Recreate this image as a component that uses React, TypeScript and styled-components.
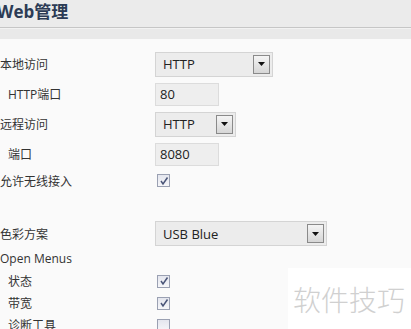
import React from "react";
import styled, { createGlobalStyle } from "styled-components";

const Global = createGlobalStyle`
  body {
    margin: 0;
    background: #fafafa;
    font-family: "Open Sans", "Noto Sans CJK SC", sans-serif;
    color: #333;
    overflow: hidden;
  }
`;

interface Field {
  label: string;
  indent?: boolean;
  kind: "select" | "input" | "check" | "blank" | "heading";
  value?: string;
  width?: number;
  checked?: boolean;
  h: number;
}

const fields: Field[] = [
  { label: "本地访问", kind: "select", value: "HTTP", width: 118, h: 30 },
  { label: "HTTP端口", indent: true, kind: "input", value: "80", width: 64, h: 30 },
  { label: "远程访问", kind: "select", value: "HTTP", width: 81, h: 30 },
  { label: "端口", indent: true, kind: "input", value: "8080", width: 64, h: 30 },
  { label: "允许无线接入", kind: "check", checked: true, h: 23 },
  { label: "", kind: "blank", h: 28 },
  { label: "色彩方案", kind: "select", value: "USB Blue", width: 172, h: 27 },
  { label: "Open Menus", kind: "heading", h: 23 },
  { label: "状态", indent: true, kind: "check", checked: true, h: 22 },
  { label: "带宽", indent: true, kind: "check", checked: true, h: 22 },
  { label: "诊断工具", indent: true, kind: "check", checked: false, h: 22 },
];

const Arrow = () => (
  <svg width="7" height="4" viewBox="0 0 7 4">
    <path d="M0 0 H7 L3.5 4 Z" fill="#111" />
  </svg>
);

const Tick = () => (
  <svg width="10" height="10" viewBox="0 0 10 10">
    <path d="M2 5 L4 8 L8.5 1.5" fill="none" stroke="#4a5578" strokeWidth="1.5" />
  </svg>
);

const App: React.FC = () => {
  return (
    <>
      <Global />
      <Header>
        <Title>Web管理</Title>
      </Header>
      <Band />
      <Form>
        {fields.map((f, i) => (
          <Row key={i} h={f.h}>
            <Label indent={f.indent}>{f.label}</Label>
            <div>
              {f.kind === "select" && (
                <Select style={{ width: f.width }}>
                  <span>{f.value}</span>
                  <DropButton>
                    <Arrow />
                  </DropButton>
                </Select>
              )}
              {f.kind === "input" && <Input style={{ width: f.width }}>{f.value}</Input>}
              {f.kind === "check" && <Check>{f.checked && <Tick />}</Check>}
            </div>
          </Row>
        ))}
      </Form>
      <Watermark>软件技巧</Watermark>
    </>
  );
};

export default App;

const Header = styled.div`
  height: 27px;
  background: #ebebeb;
  border-bottom: 1px solid #c6c6c6;
  display: flex;
  align-items: center;
`;

const Title = styled.div`
  margin-left: -3px;
  font-size: 17px;
  font-weight: bold;
  color: #2c3b55;
  line-height: 1;
  margin-top: -4px;
`;

const Band = styled.div`
  height: 10px;
  background: #e9e9e9;
  border-top: 1px solid #f2f2f2;
`;

const Form = styled.div`
  padding-top: 10px;
`;

const Row = styled.div<{ h: number }>`
  display: grid;
  grid-template-columns: 155px 1fr;
  align-items: center;
  height: ${(p) => p.h}px;
`;

const Label = styled.div<{ indent?: boolean }>`
  font-size: 12px;
  padding-left: ${(p) => (p.indent ? 8 : 0)}px;
  white-space: nowrap;
`;

const Select = styled.div`
  box-sizing: border-box;
  height: 25px;
  background: #ececec;
  border: 1px solid #d4d4d4;
  display: flex;
  align-items: center;
  justify-content: space-between;
  padding: 0 2px 0 7px;
  font-size: 13px;
  color: #222;
`;

const DropButton = styled.div`
  box-sizing: border-box;
  width: 17px;
  height: 19px;
  border: 1px solid #8a8a8a;
  background: linear-gradient(#f4f4f4, #d6d6d6);
  display: flex;
  align-items: center;
  justify-content: center;
`;

const Input = styled.div`
  box-sizing: border-box;
  height: 23px;
  background: #eeeeee;
  border: 1px solid #dcdcdc;
  display: flex;
  align-items: center;
  padding-left: 4px;
  font-size: 13px;
  color: #222;
`;

const Check = styled.div`
  box-sizing: border-box;
  width: 13px;
  height: 13px;
  margin-left: 2px;
  border: 1px solid #9aa0b2;
  background: linear-gradient(#e4e6ee, #f6f6f9);
  display: flex;
  align-items: center;
  justify-content: center;
`;

const Watermark = styled.div`
  position: absolute;
  left: 288px;
  top: 268px;
  width: 123px;
  height: 61px;
  background: #fff;
  color: #d0d0d0;
  font-family: "Noto Sans CJK SC", sans-serif;
  font-weight: 300;
  font-size: 28px;
  padding-left: 5px;
  box-sizing: border-box;
  display: flex;
  align-items: center;
`;
